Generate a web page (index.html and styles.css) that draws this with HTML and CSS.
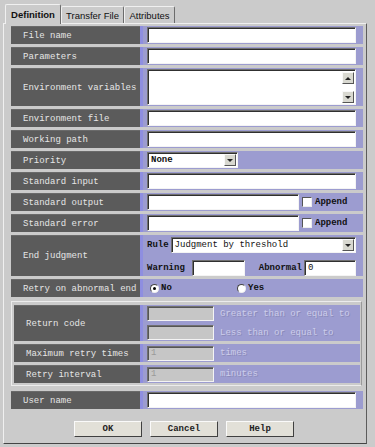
FILE: index.html
```html
<!DOCTYPE html>
<html lang="en">
<head>
  <meta charset="UTF-8" />
  <meta name="viewport" content="width=device-width, initial-scale=1.0"/>
  <title>Job Definition</title>
  <link rel="stylesheet" href="styles.css">
</head>
<body>
  <div class="window">
    <div class="tabs">
      <div class="tab tab-def active">Definition</div>
      <div class="tab tab-transfer">Transfer File</div>
      <div class="tab tab-attr">Attributes</div>
    </div>

    <div class="panel">
      <div class="rows">
        <div class="row">
          <div class="label">File name</div>
          <div class="value"><input class="field" type="text" /></div>
        </div>
        <div class="row">
          <div class="label">Parameters</div>
          <div class="value"><input class="field" type="text" /></div>
        </div>
        <div class="row row-env">
          <div class="label">Environment variables</div>
          <div class="value">
            <div class="textarea">
              <div class="scroll">
                <span class="scroll-btn"><span class="arrow-up"></span></span>
                <span class="scroll-btn"><span class="arrow-down"></span></span>
              </div>
            </div>
          </div>
        </div>
        <div class="row">
          <div class="label">Environment file</div>
          <div class="value"><input class="field" type="text" /></div>
        </div>
        <div class="row">
          <div class="label">Working path</div>
          <div class="value"><input class="field" type="text" /></div>
        </div>
        <div class="row">
          <div class="label">Priority</div>
          <div class="value">
            <div class="select select-priority">
              <span class="select-text">None</span>
              <span class="select-btn"><span class="arrow-down"></span></span>
            </div>
          </div>
        </div>
        <div class="row">
          <div class="label">Standard input</div>
          <div class="value"><input class="field" type="text" /></div>
        </div>
        <div class="row">
          <div class="label">Standard output</div>
          <div class="value">
            <input class="field field-short" type="text" />
            <span class="check"></span>
            <span class="opt">Append</span>
          </div>
        </div>
        <div class="row">
          <div class="label">Standard error</div>
          <div class="value">
            <input class="field field-short" type="text" />
            <span class="check"></span>
            <span class="opt">Append</span>
          </div>
        </div>
        <div class="row row-judge">
          <div class="label">End judgment</div>
          <div class="value value-judge">
            <div class="judge-line">
              <span class="opt">Rule</span>
              <div class="select select-rule">
                <span class="select-text">Judgment by threshold</span>
                <span class="select-btn"><span class="arrow-down"></span></span>
              </div>
            </div>
            <div class="judge-line">
              <span class="opt opt-warning">Warning</span>
              <input class="field field-warn" type="text" />
              <span class="opt opt-abnormal">Abnormal</span>
              <input class="field field-abn" type="text" value="0" />
            </div>
          </div>
        </div>
        <div class="row">
          <div class="label">Retry on abnormal end</div>
          <div class="value">
            <span class="radio checked"></span><span class="opt radio-no">No</span>
            <span class="radio"></span><span class="opt">Yes</span>
          </div>
        </div>

        <div class="group">
          <div class="row row-return">
            <div class="label">Return code</div>
            <div class="value value-return">
              <div class="return-line">
                <input class="field field-off" type="text" disabled />
                <span class="off-text">Greater than or equal to</span>
              </div>
              <div class="return-line">
                <input class="field field-off" type="text" disabled />
                <span class="off-text">Less than or equal to</span>
              </div>
            </div>
          </div>
          <div class="row">
            <div class="label">Maximum retry times</div>
            <div class="value">
              <input class="field field-off" type="text" value="1" disabled />
              <span class="off-text">times</span>
            </div>
          </div>
          <div class="row">
            <div class="label">Retry interval</div>
            <div class="value">
              <input class="field field-off" type="text" value="1" disabled />
              <span class="off-text">minutes</span>
            </div>
          </div>
        </div>

        <div class="row row-user">
          <div class="label">User name</div>
          <div class="value"><input class="field" type="text" /></div>
        </div>
      </div>

      <div class="buttons">
        <button type="button">OK</button>
        <button type="button">Cancel</button>
        <button type="button">Help</button>
      </div>
    </div>
  </div>
</body>
</html>
```

FILE: styles.css
```css
* {
  margin: 0;
  padding: 0;
  box-sizing: border-box;
}

body {
  background-color: #cbcbcb;
  font-family: "Liberation Mono", "DejaVu Sans Mono", monospace;
  font-size: 9px;
}

.window {
  width: 375px;
  height: 447px;
}

/* tabs */
.tabs {
  display: flex;
  align-items: flex-end;
  height: 23px;
  padding-left: 5px;
}

.tab {
  font-family: "Liberation Sans", Arial, sans-serif;
  font-size: 9.5px;
  color: #111;
  height: 17px;
  display: flex;
  align-items: center;
  justify-content: center;
  border: 1px solid #f0f0f0;
  border-right-color: #6c6c6c;
  border-bottom: none;
  border-radius: 2px 2px 0 0;
}

.tab.active {
  font-weight: bold;
  height: 20px;
  margin-bottom: -1px;
  background-color: #cbcbcb;
  position: relative;
}

.tab-def { width: 56px; }
.tab-transfer { width: 63px; }
.tab-attr { width: 51px; }

/* panel */
.panel {
  margin-left: 3px;
  width: 364px;
  height: 421px;
  border: 1px solid #f0f0f0;
  border-right-color: #5c5c5c;
  border-bottom-color: #444;
  padding: 2px 3px 0 7px;
}

.rows {
  display: flex;
  flex-direction: column;
  gap: 3px;
}

.row {
  display: grid;
  grid-template-columns: 129px minmax(0, 1fr);
  min-height: 18px;
}

.label {
  background-color: #5b5b5b;
  color: #e6e6e6;
  padding-left: 12px;
  display: flex;
  align-items: center;
  white-space: nowrap;
  border-top: 1px solid #6a6a6a;
}

.value {
  min-width: 0;
  background-color: #9c9cd0;
  border-left: 3px solid #8e8ee0;
  padding: 1px 7px 1px 4px;
  display: flex;
  align-items: center;
  color: #111;
}

/* inputs */
.field {
  flex: 1;
  min-width: 0;
  height: 16px;
  background-color: #fff;
  border: 1px solid;
  border-color: #707070 #f4f4f4 #f4f4f4 #707070;
  box-shadow: inset 1px 1px 0 #303030;
  font-family: inherit;
  font-size: 9px;
  padding: 0 3px;
  outline: none;
  color: #111;
}

.field-short {
  flex: none;
  width: 152px;
}

.field-off {
  flex: none;
  width: 67px;
  height: 15px;
  background-color: #c6c6c6;
  color: #9a9a9a;
  box-shadow: inset 1px 1px 0 #555;
}

.off-text {
  margin-left: 6px;
  color: #cdcdea;
  text-shadow: 1px 1px 0 #8a8ab8;
  white-space: nowrap;
}

.opt {
  font-weight: bold;
  color: #111;
  white-space: nowrap;
}

.check {
  width: 10px;
  height: 10px;
  margin: 0 3px 0 3px;
  background-color: #fff;
  border: 1px solid;
  border-color: #555 #eee #eee #555;
}

/* textarea */
.row-env {
  min-height: 38px;
}

.textarea {
  flex: 1;
  height: 36px;
  background-color: #fff;
  border: 1px solid;
  border-color: #707070 #f4f4f4 #f4f4f4 #707070;
  box-shadow: inset 1px 1px 0 #303030;
  display: flex;
  justify-content: flex-end;
}

.scroll {
  display: flex;
  flex-direction: column;
  justify-content: space-between;
  padding: 2px 1px 1px 0;
}

.scroll-btn,
.select-btn {
  width: 12px;
  height: 12px;
  background-color: #d8d8d0;
  border: 1px solid;
  border-color: #f8f8f8 #555 #555 #f8f8f8;
  display: flex;
  align-items: center;
  justify-content: center;
}

.arrow-up,
.arrow-down {
  width: 0;
  height: 0;
  border-left: 3px solid transparent;
  border-right: 3px solid transparent;
}

.arrow-up { border-bottom: 3px solid #222; }
.arrow-down { border-top: 3px solid #222; }

/* select */
.select {
  height: 16px;
  background-color: #fff;
  border: 1px solid;
  border-color: #707070 #f4f4f4 #f4f4f4 #707070;
  box-shadow: inset 1px 1px 0 #303030;
  display: flex;
  align-items: center;
  justify-content: space-between;
  padding: 0 1px 0 3px;
}

.select-priority {
  width: 91px;
}

.select-priority .select-text {
  font-weight: bold;
}

.select-rule {
  flex: 1;
  margin-left: 2px;
}

/* end judgment */
.row-judge {
  min-height: 41px;
}

.value-judge {
  flex-direction: column;
  align-items: stretch;
  justify-content: space-between;
  padding-top: 2px;
  padding-bottom: 0;
}

.judge-line {
  display: flex;
  align-items: center;
}

.field-warn {
  flex: none;
  width: 53px;
  margin-left: 7px;
}

.opt-abnormal {
  margin-left: 14px;
}

.field-abn {
  flex: none;
  width: 52px;
  margin-left: auto;
}

/* radios */
.radio {
  width: 9px;
  height: 9px;
  border-radius: 50%;
  background-color: #fff;
  border: 1px solid;
  border-color: #444 #eee #eee #444;
  margin: 0 2px 0 3px;
  display: flex;
  align-items: center;
  justify-content: center;
}

.radio.checked::after {
  content: "";
  width: 3px;
  height: 3px;
  border-radius: 50%;
  background-color: #000;
}

.radio-no {
  width: 73px;
}

/* retry group */
.group {
  margin-top: 1px;
  width: 351px;
  border: 1px solid #ececec;
  border-right-color: #9a9a9a;
  border-bottom-color: #ececec;
  padding: 3px 1px 2px 2px;
  display: flex;
  flex-direction: column;
  gap: 3px;
}

.group .row {
  grid-template-columns: 126px minmax(0, 1fr);
}

.row-return {
  min-height: 36px;
}

.value-return {
  flex-direction: column;
  align-items: stretch;
  justify-content: space-between;
}

.return-line {
  display: flex;
  align-items: center;
}

.row-user {
  margin-top: 2px;
}

/* buttons */
.buttons {
  display: flex;
  justify-content: center;
  gap: 8px;
  margin-top: 12px;
  margin-left: -6px;
}

.buttons button {
  width: 68px;
  height: 16px;
  background-color: #e2e0d8;
  border: 1px solid;
  border-color: #fafafa #404040 #404040 #fafafa;
  font-family: "Liberation Mono", monospace;
  font-size: 9px;
  font-weight: bold;
  color: #222;
  cursor: pointer;
}
```
